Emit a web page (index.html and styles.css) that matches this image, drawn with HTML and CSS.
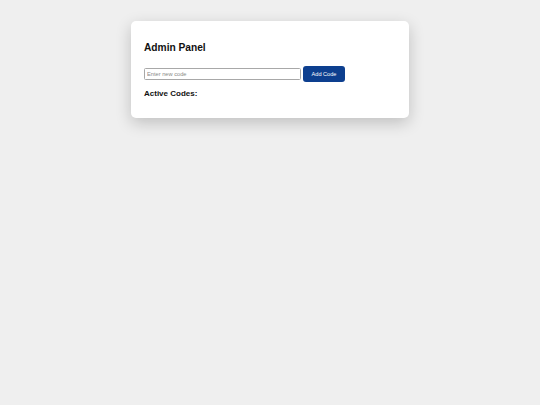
FILE: index.html
```html
<!DOCTYPE html>
<html lang="en">
<head>
    <meta charset="UTF-8">
    <meta name="viewport" content="width=device-width, initial-scale=1.0">
    <title>Admin Panel</title>
    <link rel="stylesheet" href="styles.css">
</head>
<body>

<div class="panel">
    <h2 class="title">Admin Panel</h2>
    <div class="add-row">
        <input type="text" id="newCode" class="code-input" placeholder="Enter new code">
        <button class="add-btn">Add Code</button>
    </div>
    <h3 class="subtitle">Active Codes:</h3>
    <ul id="codeList" class="code-list"></ul>
</div>

</body>
</html>
```

FILE: styles.css
```css
body {
    font-family: 'Liberation Sans', Arial, sans-serif;
    margin: 0;
    padding: 21px 0 0;
    min-height: 100vh;
    box-sizing: border-box;
    background-color: #efefef;
}
.panel {
    box-sizing: border-box;
    width: 278px;
    margin: 0 auto;
    padding: 13px;
    background: white;
    border-radius: 5px;
    box-shadow: 0 5px 16px rgba(0, 0, 0, 0.2);
}
.title {
    font-size: 10.2px;
    line-height: 12px;
    margin: 8px 0 12px;
    color: #111;
}
.add-row {
    display: flex;
    align-items: center;
    gap: 2px;
}
.code-input {
    box-sizing: border-box;
    width: 157px;
    height: 12.5px;
    padding: 0 2px;
    margin: 0;
    border: 1px solid #a8a8a8;
    border-radius: 1.5px;
    font-family: inherit;
    font-size: 5.7px;
}
.code-input::placeholder {
    color: #8a8a8a;
}
.add-btn {
    box-sizing: border-box;
    width: 42px;
    height: 16px;
    margin: 0;
    padding: 0;
    border: none;
    border-radius: 3px;
    background: #0d3f8f;
    color: white;
    font-family: inherit;
    font-size: 5.6px;
}
.subtitle {
    font-size: 8px;
    line-height: 10px;
    margin: 7px 0 6px;
    color: #111;
}
.code-list {
    margin: 0;
    padding: 0;
    list-style: none;
}
```
